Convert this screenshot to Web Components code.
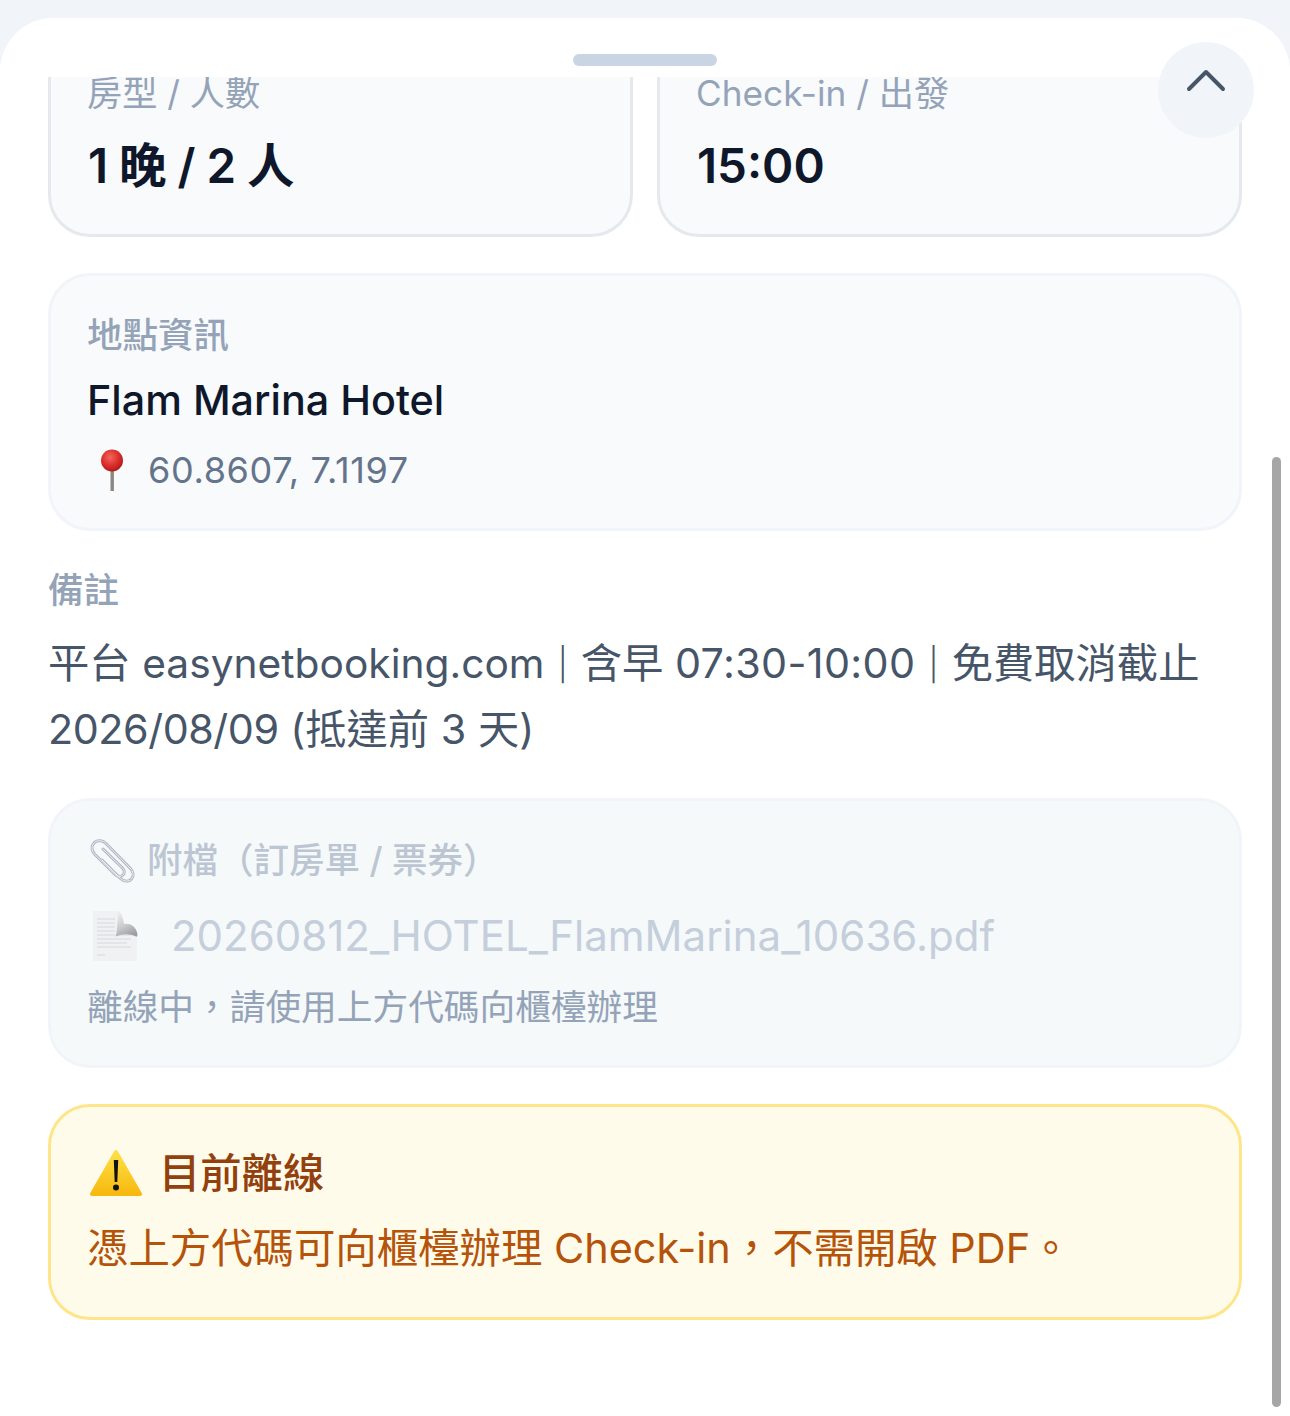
<!DOCTYPE html>
<html lang="zh-Hant">
<head>
<meta charset="utf-8">
<title>Hotel detail</title>
<style>
	html, body { margin: 0; height: 100%; overflow: hidden; background: #f1f5f9; }
	body { font-family: Inter, "Noto Sans CJK TC", sans-serif; }
</style>
</head>
<body>
<detail-sheet>
	<div class="grid-slot" slot="top">
		<info-card label="房型 / 人數" value="1 晚 / 2 人"></info-card>
		<info-card label="Check-in / 出發" value="15:00"></info-card>
	</div>
	<location-card name="Flam Marina Hotel" coords="60.8607, 7.1197"></location-card>
	<notes-block label="備註"><span>平台</span> <span class="latin">easynetbooking.com</span> <span class="sep">|</span> <span>含早</span> <span class="num">07:30-10:00</span> <span class="sep">|</span> <span>免費取消截止</span> <span class="date">2026/08/09</span> <span>(抵達前 3 天)</span></notes-block>
	<attachment-card file="20260812_HOTEL_FlamMarina_10636.pdf"></attachment-card>
	<offline-banner title="目前離線">憑上方代碼可向櫃檯辦理 Check-in，不需開啟 PDF。</offline-banner>
</detail-sheet>

<script>
	/**
	 * Bottom sheet with handle, collapse button, clipped scroll area and scrollbar.
	 */
	class DetailSheet extends HTMLElement {
		constructor() {
			super();
			this.shadow = this.attachShadow({ mode: 'open' });
		}

		connectedCallback() {
			this.shadow.innerHTML = `
    <style>
        :host { display: block; position: relative; height: 1398px; margin-top: 18px; background: #fff; border-radius: 54px 54px 0 0; overflow: hidden; }
        header { height: 59px; display: flex; justify-content: center; align-items: flex-start; background: #fff; position: relative; z-index: 1; }
        .handle { width: 144px; height: 12px; margin-top: 36px; border-radius: 6px; background: #c9d5e3; }
        .scroll { height: 1339px; overflow: hidden; padding: 0 48px; box-sizing: border-box; }
        .inner { margin-top: -47px; display: flex; flex-direction: column; }
        button { position: absolute; z-index: 2; left: 1158px; top: 24px; width: 96px; height: 96px; border: 0; padding: 0; border-radius: 50%; background: #f1f5f9; }
        button svg { display: block; position: absolute; left: 27px; top: 26px; }
        .bar { position: absolute; left: 1272px; top: 439px; width: 9px; height: 950px; border-radius: 5px; background: #a6a6a6; z-index: 2; }
        ::slotted(.grid-slot) { display: grid; grid-template-columns: 1fr 1fr; gap: 24px; }
    </style>
    <header><div class="handle"></div></header>
    <button type="button" aria-label="collapse">
        <svg width="42" height="26" viewBox="0 0 42 26" fill="none" stroke="#475569" stroke-width="4" stroke-linecap="round" stroke-linejoin="round"><path d="M4 21 21 4l17 17"/></svg>
    </button>
    <div class="scroll"><div class="inner"><slot name="top"></slot><slot></slot></div></div>
    <div class="bar"></div>
    `;
		}
	}

	/**
	 * Small stat card: label and bold value.
	 */
	class InfoCard extends HTMLElement {
		constructor() {
			super();
			this.shadow = this.attachShadow({ mode: 'open' });
		}

		connectedCallback() {
			this.shadow.innerHTML = `
    <style>
        :host { display: block; padding: 36px 36px 39px; background: #f8fafc; border: 3px solid #e5e9ed; border-radius: 42px; }
        .label { font-size: 35.2px; line-height: 48px; color: #94a3b8; }
        .value { font-size: 47.5px; line-height: 60px; font-weight: 600; word-spacing: -1px; color: #0f172a; margin-top: 18px; position: relative; top: 1px; left: 1px; }
    </style>
    <div class="label">${this.getAttribute('label')}</div>
    <div class="value">${this.getAttribute('value')}</div>
    `;
		}
	}

	/**
	 * Location card with hotel name and coordinates.
	 */
	class LocationCard extends HTMLElement {
		constructor() {
			super();
			this.shadow = this.attachShadow({ mode: 'open' });
		}

		connectedCallback() {
			this.shadow.innerHTML = `
    <style>
        :host { display: block; margin-top: 36px; padding: 36px 36px 34px; background: #f8fafc; border: 3px solid #f1f5f9; border-radius: 42px; }
        .label { font-size: 35.5px; line-height: 48px; color: #94a3b8; font-weight: 500; }
        .name { font-size: 41.3px; line-height: 56px; font-weight: 500; color: #0f172a; margin-top: 12px; }
        .coords { display: flex; align-items: center; font-size: 36px; line-height: 48px; letter-spacing: .65px; color: #64748b; margin-top: 18px; }
        svg { display: block; width: 30px; height: 44px; margin: 0 21px 0 10px; }
    </style>
    <div class="label">地點資訊</div>
    <div class="name">${this.getAttribute('name')}</div>
    <div class="coords">
        <svg viewBox="0 0 30 44">
            <defs><radialGradient id="pin" cx=".42" cy=".35" r=".7"><stop offset="0" stop-color="#f4665f"/><stop offset=".55" stop-color="#dc2f2c"/><stop offset="1" stop-color="#a91616"/></radialGradient></defs>
            <rect x="13.5" y="20" width="3.4" height="23" fill="#8b8680"/>
            <circle cx="15" cy="12.5" r="11" fill="url(#pin)"/>
        </svg>
        <span>${this.getAttribute('coords')}</span>
    </div>
    `;
		}
	}

	/**
	 * Plain notes block under the cards.
	 */
	class NotesBlock extends HTMLElement {
		constructor() {
			super();
			this.shadow = this.attachShadow({ mode: 'open' });
		}

		connectedCallback() {
			this.shadow.innerHTML = `
    <style>
        :host { display: block; margin-top: 36px; }
        .label { font-size: 35.5px; line-height: 48px; color: #94a3b8; font-weight: 500; }
        .text { font-size: 41.3px; line-height: 66px; color: #475569; margin-top: 15px; }
        ::slotted(.latin) { font-size: 40.7px; line-height: 0; }
        ::slotted(.num) { letter-spacing: .35px; }
        ::slotted(.date) { letter-spacing: -.45px; }
        ::slotted(.sep) { font-size: 32px; line-height: 0; font-weight: 300; margin: 0 1.5px; position: relative; top: -2px; }
    </style>
    <div class="label">${this.getAttribute('label')}</div>
    <div class="text"><slot></slot></div>
    `;
		}
	}

	/**
	 * Disabled attachment card, shown while offline.
	 */
	class AttachmentCard extends HTMLElement {
		constructor() {
			super();
			this.shadow = this.attachShadow({ mode: 'open' });
		}

		connectedCallback() {
			this.shadow.innerHTML = `
    <style>
        :host { display: block; margin-top: 36px; padding: 36px 36px 34px; background: #f5f9fa; border: 3px solid #f1f5f9; border-radius: 42px; }
        .row { display: flex; align-items: center; }
        .label { font-size: 35.5px; line-height: 48px; color: #bcc6d3; font-weight: 500; }
        .label svg { display: block; width: 46px; height: 46px; margin: 0 12px 0 2px; flex: none; }
        .file { font-size: 42px; line-height: 56px; color: #c5cedb; margin-top: 23px; }
        .file svg { display: block; width: 46px; height: 52px; margin: 0 33px 0 5px; flex: none; }
        .hint { font-size: 35.7px; line-height: 48px; color: #94a3b8; margin-top: 19px; }
    </style>
    <div class="row label">
        <svg viewBox="0 0 46 46" fill="none" stroke-linecap="round">
            <path stroke="#b1b8c4" stroke-width="3" d="M13 22 31 40c4 4 9 4 11.5 1s2-7.500-1.500-11L17 5.500C14 2.500 9 1.500 5.500 4.500 2 8 2.500 12.500 5.500 16L26 36.500c2.500 2.500 6 2.500 8 .5s1.500-5-1-7.500L14 11"/>
            <path stroke="#eef1f4" stroke-width="1" d="M13 22 31 40c4 4 9 4 11.5 1s2-7.500-1.500-11L17 5.500C14 2.500 9 1.500 5.500 4.500 2 8 2.500 12.500 5.500 16L26 36.500c2.500 2.500 6 2.500 8 .5s1.500-5-1-7.500L14 11"/>
        </svg>
        <span>附檔（訂房單 / 票券）</span>
    </div>
    <div class="row file">
        <svg viewBox="0 0 46 52">
            <defs><linearGradient id="fold" x1=".2" y1="0" x2=".6" y2="1"><stop offset="0" stop-color="#eeeff0"/><stop offset=".55" stop-color="#c9cbcd"/><stop offset="1" stop-color="#9c9ea1"/></linearGradient></defs>
            <path d="M1 1h26v15l18 6v29H1z" fill="#f0f1f2"/>
            <path d="M5 9h18M5 13h18M5 17h18M5 21h18M5 25h34M5 29h34M5 33h30M5 37h34M5 45h8" stroke="#d6d8db" stroke-width="1"/>
            <path d="M26 1c4 2 5 7 6 13 6-1 12 2 13.500 10.500 0 1.500-.5 2.500-1.500 2-7-3-13-3-20 0 1-8 2-18 2-25.500z" fill="url(#fold)"/>
        </svg>
        <span>${this.getAttribute('file')}</span>
    </div>
    <div class="hint">離線中，請使用上方代碼向櫃檯辦理</div>
    `;
		}
	}

	/**
	 * Yellow offline warning banner.
	 */
	class OfflineBanner extends HTMLElement {
		constructor() {
			super();
			this.shadow = this.attachShadow({ mode: 'open' });
		}

		connectedCallback() {
			this.shadow.innerHTML = `
    <style>
        :host { display: block; margin-top: 36px; padding: 36px 36px 39px; background: #fffbeb; border: 3px solid #fde68a; border-radius: 42px; }
        .title { display: flex; align-items: center; font-size: 41.3px; line-height: 60px; font-weight: 500; color: #92400e; }
        svg { display: block; width: 54px; height: 48px; margin: 0 16px 0 2px; flex: none; }
        .text { font-size: 41.4px; line-height: 60px; color: #b45309; margin-top: 15px; }
    </style>
    <div class="title">
        <svg viewBox="0 0 54 48">
            <defs><linearGradient id="warn" x1="0" y1="0" x2="0" y2="1"><stop offset="0" stop-color="#fde047"/><stop offset="1" stop-color="#f7b90f"/></linearGradient></defs>
            <path d="M27 3 51 45H3z" fill="url(#warn)" stroke="url(#warn)" stroke-width="4" stroke-linejoin="round"/>
            <path d="M24.800 11h4.400l-.9 22h-2.600z" fill="#111"/>
            <circle cx="27" cy="38.500" r="3" fill="#111"/>
        </svg>
        <span>${this.getAttribute('title')}</span>
    </div>
    <div class="text"><slot></slot></div>
    `;
		}
	}

	window.customElements.define('detail-sheet', DetailSheet);
	window.customElements.define('info-card', InfoCard);
	window.customElements.define('location-card', LocationCard);
	window.customElements.define('notes-block', NotesBlock);
	window.customElements.define('attachment-card', AttachmentCard);
	window.customElements.define('offline-banner', OfflineBanner);
</script>
</body>
</html>
